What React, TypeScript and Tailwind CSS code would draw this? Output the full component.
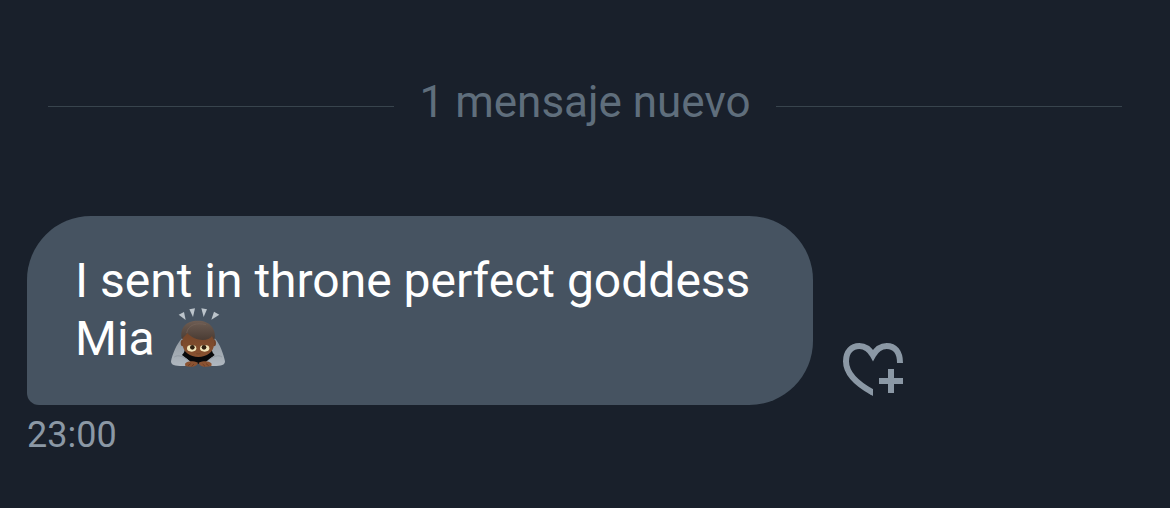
function PersonBowing() {
  return (
    <svg role="img" aria-label="Person bowing" viewBox="30 20 171 183" className="-mt-3 ml-[3px] inline-block h-[61px] w-[57px] align-[-13px]">
      <defs>
        <linearGradient id="hair" x1="0" y1="0" x2="0" y2="1">
          <stop offset="0" stopColor="#6e5d53" />
          <stop offset="1" stopColor="#4a3c34" />
        </linearGradient>
        <linearGradient id="sleeve" x1="0" y1="0" x2="0" y2="1">
          <stop offset="0" stopColor="#929aa2" />
          <stop offset="1" stopColor="#b0b8c0" />
        </linearGradient>
        <linearGradient id="skin" x1="0" y1="0" x2="0" y2="1">
          <stop offset="0" stopColor="#6f4228" />
          <stop offset="1" stopColor="#8a5230" />
        </linearGradient>
      </defs>
      <g fill="#bcc4cb">
        <path d="M56 43 L72 35 L77 59Z" />
        <path d="M88 27 L105 24 L99 50Z" />
        <path d="M124 24 L141 27 L131 50Z" />
        <path d="M162 34 L178 43 L154 58Z" />
      </g>
      <path d="M68 148 H162 L170 162 L152 190 H78 L60 162Z" fill="#08090b" />
      <path d="M66 114 C50 130 37 163 33 183 C33 196 47 198 82 197 L92 184 L66 164 C76 156 78 140 72 114Z" fill="url(#sleeve)" />
      <path d="M164 114 C180 130 191 163 195 183 C195 196 181 198 148 197 L138 184 L164 164 C154 156 152 140 158 114Z" fill="url(#sleeve)" />
      <path d="M43 170 C54 162 68 168 84 179 M186 170 C175 162 161 168 146 179" fill="none" stroke="#929ba4" strokeWidth="3" />
      <path d="M75 190 C84 181 98 181 114 187 C111 200 91 202 76 197Z M155 190 C146 181 132 181 116 187 C119 200 139 202 154 197Z" fill="#8b5332" />
      <path d="M84 196 L92 190 M95 198 L102 191 M146 196 L138 190 M135 198 L128 191" stroke="#5d351f" strokeWidth="2" />
      <ellipse cx="68" cy="128" rx="6" ry="10" fill="#73442a" />
      <ellipse cx="162" cy="128" rx="6" ry="10" fill="#73442a" />
      <path d="M68 108 C68 72 162 72 162 108 V132 C162 156 139 170 115 170 C91 170 68 156 68 132Z" fill="url(#skin)" />
      <path d="M66 118 C57 82 80 61 112 61 C148 60 170 84 164 119 C160 117 158 112 156 107 C146 124 104 124 82 98 C78 105 71 108 66 118Z" fill="url(#hair)" />
      <path d="M80 98 C84 73 110 66 138 73" fill="none" stroke="#75645a" strokeWidth="2" />
      <ellipse cx="95" cy="144" rx="14" ry="10" fill="#f1e4b9" />
      <ellipse cx="134" cy="144" rx="14" ry="10" fill="#f1e4b9" />
      <circle cx="97" cy="141" r="7" fill="#302010" />
      <circle cx="132" cy="141" r="7" fill="#302010" />
      <path d="M109 160 Q115 162 121 160" fill="none" stroke="#6b3f26" strokeWidth="2" />
    </svg>
  );
}

function HeartPlus() {
  return (
    <svg aria-hidden="true" viewBox="36 36 186 165" className="h-[55px] w-[62px]">
      <path
        d="M129 188 C79 161 48 130 48 94 C48 65 65 48 88 48 C107 48 120 60 129 76 C138 60 151 48 170 48 C194 48 210 65 210 99"
        fill="none"
        stroke="#8b98a5"
        strokeWidth="18"
        clipPath="url(#heart-edge)"
      />
      <clipPath id="heart-edge">
        <path d="M30 30H222V99H129V199H30Z" />
      </clipPath>
      <path d="M129 176V198L116 190Z" fill="#8b98a5" />
      <path d="M174 117h18v27h27v18h-27v27h-18v-27h-27v-18h27z" fill="#8b98a5" />
    </svg>
  );
}

export default function App() {
  return (
    <main className="min-h-screen bg-[#19202b] px-[27px] pt-[72px] font-[Roboto,sans-serif]">
      <div className="mx-[21px] flex items-center gap-[26px]">
        <span className="mt-2 h-px flex-1 bg-[#38444d]" />
        <h1 className="text-[44px] leading-[60px] text-[#5f6e7c]">1 mensaje nuevo</h1>
        <span className="mt-2 h-px flex-1 bg-[#38444d]" />
      </div>
      <article className="mt-[84px]">
        <div className="flex items-end gap-[29px]">
          <p className="max-w-[786px] rounded-[64px] rounded-bl-[12px] bg-[#465361] pt-9 pr-12 pb-[37px] pl-12 text-[48px] leading-[58px] text-white">
            I sent in throne perfect goddess Mia <PersonBowing />
          </p>
          <button type="button" aria-label="Add reaction" className="mb-2 shrink-0">
            <HeartPlus />
          </button>
        </div>
        <time className="mt-2 block text-[36px] leading-[44px] text-[#8b98a5]">23:00</time>
      </article>
    </main>
  );
}
